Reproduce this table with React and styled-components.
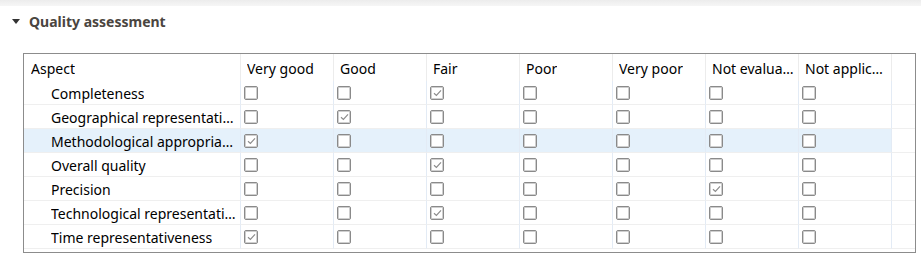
import React from 'react'
import styled, { createGlobalStyle } from 'styled-components'

const GlobalStyle = createGlobalStyle`
    body {
        margin: 0;
        background: #ffffff;
        font-family: "Noto Sans", "Open Sans", sans-serif;
    }
`

const Page = styled.div`
    width: 921px;
    height: 258px;
    overflow: hidden;
    background: #ffffff;
`

const TopBand = styled.div`
    height: 6px;
    background: linear-gradient(#ececec, #f6f6f6);
`

const SectionHeader = styled.div`
    display: flex;
    align-items: center;
    gap: 9px;
    height: 30px;
    padding-left: 12px;
`

const Twistie = styled.span`
    width: 0;
    height: 0;
    border-left: 4px solid transparent;
    border-right: 4px solid transparent;
    border-top: 5px solid #333333;
    margin-top: 1px;
`

const SectionTitle = styled.span`
    font-size: 14px;
    font-weight: 700;
    color: #4a4540;
`

const Body = styled.div`
    padding: 17px 5px 0 23px;
`

const Grid = styled.div`
    display: grid;
    grid-template-columns: 217px repeat(7, 93px) 1fr;
    border: 1px solid #8c8c8c;
    height: 198px;
    align-content: start;
`

const HeadCell = styled.div`
    height: 27px;
    display: flex;
    align-items: center;
    padding: 2px 3px 0 ${p => (p.first ? '7px' : '6px')};
    box-sizing: border-box;
    font-size: 14px;
    color: #000000;
    border-right: ${p => (p.last ? 'none' : '1px solid #ececec')};
    min-width: 0;
`

const Row = styled.div`
    display: contents;
`

const Cell = styled.div`
    height: 23px;
    display: flex;
    align-items: center;
    border-bottom: 1px solid #efefef;
    border-right: ${p => (p.last ? 'none' : '1px solid #e3ebf5')};
    background: ${p => (p.selected ? '#e5f1fb' : 'transparent')};
    padding-left: ${p => (p.label ? '27px' : '3px')};
    padding-right: ${p => (p.label ? '2px' : '0')};
    padding-top: ${p => (p.label ? '2px' : '0')};
    box-sizing: border-box;
    height: 24px;
    font-size: 14px;
    color: #000000;
    min-width: 0;
`

const Label = styled.span`
    white-space: nowrap;
    overflow: hidden;
    text-overflow: ellipsis;
    min-width: 0;
`

const Box = styled.span`
    box-sizing: border-box;
    width: 14px;
    height: 14px;
    border: 1px solid #8a8a8a;
    box-shadow: inset 0 0 0 1px #cfcfcf;
    border-radius: 2px;
    background: #ffffff;
    display: flex;
    align-items: center;
    justify-content: center;
`

const columns = ['Very good', 'Good', 'Fair', 'Poor', 'Very poor', 'Not evaluated', 'Not applicable']

const aspects = [
    { name: 'Completeness', value: 2 },
    { name: 'Geographical representativeness', value: 1 },
    { name: 'Methodological appropriateness and consistency', value: 0 },
    { name: 'Overall quality', value: 2 },
    { name: 'Precision', value: 5 },
    { name: 'Technological representativeness', value: 2 },
    { name: 'Time representativeness', value: 0 },
]

function CheckBox({ checked }) {
    return (
        <Box>
            {checked && (
                <svg width="9" height="8" viewBox="0 0 9 8">
                    <path d="M1 4.2 L3.4 6.4 L8 1.4" fill="none" stroke="#8c8c8c" strokeWidth="1.2" />
                </svg>
            )}
        </Box>
    )
}

export default function App() {
    return (
        <Page>
            <GlobalStyle />
            <TopBand />
            <SectionHeader>
                <Twistie />
                <SectionTitle>Quality assessment</SectionTitle>
            </SectionHeader>
            <Body>
                <Grid>
                    <HeadCell first>
                        <Label>Aspect</Label>
                    </HeadCell>
                    {columns.map(c => (
                        <HeadCell key={c}>
                            <Label>{c}</Label>
                        </HeadCell>
                    ))}
                    <HeadCell last />
                    {aspects.map((a, i) => {
                        const selected = i === 2
                        return (
                            <Row key={a.name}>
                                <Cell label selected={selected}>
                                    <Label>{a.name}</Label>
                                </Cell>
                                {columns.map((c, j) => (
                                    <Cell key={c} selected={selected}>
                                        <CheckBox checked={a.value === j} />
                                    </Cell>
                                ))}
                                <Cell last />
                            </Row>
                        )
                    })}
                </Grid>
            </Body>
        </Page>
    )
}
